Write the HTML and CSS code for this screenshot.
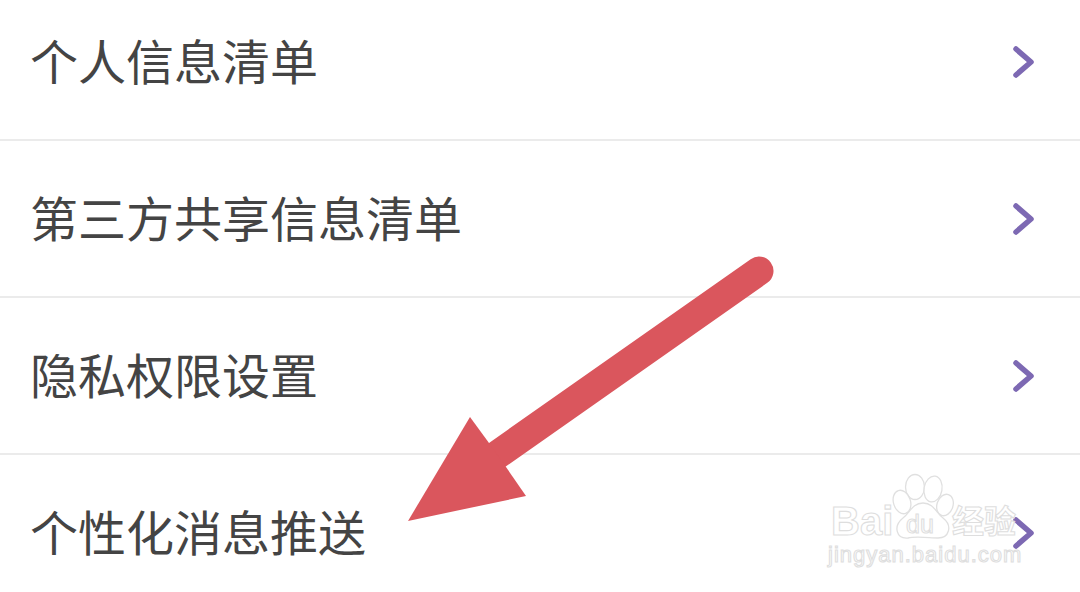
FILE: index.html
```html
<!DOCTYPE html>
<html lang="zh">
<head>
<meta charset="utf-8">
<title>设置</title>
<link rel="stylesheet" href="styles.css">
</head>
<body>
<main class="page">
  <ul class="list">
    <li class="row"><span class="label">个人信息清单</span><svg class="chev" viewBox="0 0 24 34"><path d="M4 4 L19 17 L4 30"/></svg></li>
    <li class="row"><span class="label">第三方共享信息清单</span><svg class="chev" viewBox="0 0 24 34"><path d="M4 4 L19 17 L4 30"/></svg></li>
    <li class="row"><span class="label">隐私权限设置</span><svg class="chev" viewBox="0 0 24 34"><path d="M4 4 L19 17 L4 30"/></svg></li>
    <li class="row"><span class="label">个性化消息推送</span><svg class="chev" viewBox="0 0 24 34"><path d="M4 4 L19 17 L4 30"/></svg></li>
  </ul>
  <svg class="arrow" viewBox="0 0 1080 592">
    <path class="arrow-tail" d="M497 455 L759 271"/>
    <polygon class="arrow-head" points="408,521 470,417 489,443 506,467 526,496"/>
  </svg>
  <svg class="mark" viewBox="0 0 1080 592">
    <g class="paw">
      <ellipse cx="915" cy="487" rx="9.5" ry="12.5"/>
      <ellipse cx="933" cy="489" rx="9" ry="13" transform="rotate(10 933 489)"/>
      <ellipse cx="902" cy="502" rx="8.5" ry="12" transform="rotate(-18 902 502)"/>
      <ellipse cx="945" cy="505" rx="8" ry="11" transform="rotate(18 945 505)"/>
      <path d="M923 503 C934 503 936 513 943 518 C953 526 949 538 938 538 C930 538 916 536 908 538 C896 539 893 526 903 518 C910 513 912 503 923 503 Z"/>
    </g>
    <text class="mark-big" x="831" y="535">Bai</text>
    <text class="mark-du" x="906" y="533">du</text>
    <text class="mark-cn" x="952" y="533">经验</text>
    <text class="mark-url" x="828" y="562">jingyan.baidu.com</text>
  </svg>
</main>
</body>
</html>
```
FILE: styles.css
```css
* { box-sizing: border-box; }
html, body { margin: 0; padding: 0; background: #fff; }
.page {
  position: relative;
  width: 1080px;
  height: 592px;
  overflow: hidden;
  background: #fff;
  font-family: "Noto Sans CJK SC", "Noto Sans", sans-serif;
}
.list {
  list-style: none;
  margin: -16px 0 0;
  padding: 0;
}
.row {
  display: flex;
  align-items: center;
  justify-content: space-between;
  height: 157px;
  padding: 0 44px 0 30px;
  border-bottom: 2px solid #ebebeb;
}
.row:last-child { border-bottom-color: transparent; }
.label {
  font-size: 48px;
  line-height: 1;
  margin-bottom: 6px;
  color: #444;
}
.chev {
  width: 24px;
  height: 34px;
  flex: none;
}
.chev path {
  fill: none;
  stroke: #7d69b3;
  stroke-width: 5.5;
  stroke-linecap: round;
  stroke-linejoin: round;
}
.arrow, .mark {
  position: absolute;
  left: 0;
  top: 0;
  width: 1080px;
  height: 592px;
}
.arrow-tail {
  fill: none;
  stroke: #da565d;
  stroke-width: 29;
  stroke-linecap: round;
}
.arrow-head { fill: #da565d; }
.paw ellipse, .paw path {
  fill: rgba(255, 255, 255, 0.7);
  stroke: #e0e0e0;
  stroke-width: 1.3;
}
.mark text {
  fill: rgba(255, 255, 255, 0.75);
  stroke: #dedede;
  stroke-width: 1.1;
}
.mark-big { font: 700 40px "Liberation Sans", sans-serif; }
.mark-du { font: 400 25px "Liberation Sans", sans-serif; }
.mark-cn { font: 700 32px "Noto Sans CJK SC", sans-serif; }
.mark-url { font: 400 22px "Liberation Sans", sans-serif; letter-spacing: 1px; }
```
